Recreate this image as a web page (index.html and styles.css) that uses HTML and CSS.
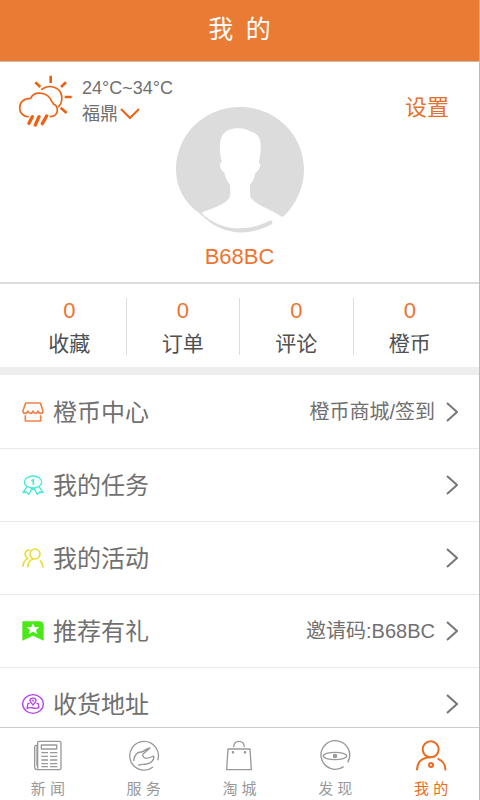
FILE: index.html
```html
<!DOCTYPE html>
<html lang="zh-CN">
<head>
<meta charset="utf-8">
<meta name="viewport" content="width=device-width, initial-scale=1">
<title>我的</title>
<link rel="stylesheet" href="styles.css">
</head>
<body>
<div class="app">
  <header class="header"><h1 class="title">我&ensp;的</h1></header>

  <main class="content">
    <section class="profile">
      <div class="weather">
        <svg class="weather-icon" viewBox="54 45 162 156" fill="none" stroke="#eb6312" stroke-width="5" stroke-linecap="round" aria-hidden="true">
          <path d="M84 170C70 170 59 159 59 143C59 126 72 115 92 115C101 93 143 93 155 124C159 127 160 129 160 132C168 135 172 143 172 150C172 163 164 169 151 170"/>
          <path d="M125 88C148 71 181 82 185 108C187 121 183 132 176 140"/>
          <path stroke-width="8" stroke-linecap="butt" d="M152 47V69M106 67L121 81M198 67L183 81M194 111H215M182 143L200 159"/>
          <path stroke-width="10" d="M97 170L87 190M117 170L106 195M140 168L127 191"/>
        </svg>
        <div class="weather-text">
          <span>24°C~34°C</span>
          <button class="city" type="button">福鼎<svg class="city-arrow" viewBox="0 0 20 12" fill="none" stroke="#eb6312" stroke-width="2" aria-hidden="true"><path d="M1 1L10 10L19 1"/></svg></button>
        </div>
      </div>
      <a class="settings" href="#settings">设置</a>
      <svg class="avatar" viewBox="48 34 384 378" aria-hidden="true">
        <path fill="#dcdcdc" d="M120 354C75 323 48 276 48 222C48 118 132 34 240 34C348 34 432 118 432 222C432 275 408 326 371 362Q365 365 360 360C334 341 294 333 273 307C269 299 270 284 270 268C279 257 284 245 286 232C293 228 298 221 300 212C301 206 299 202 296 199C300 183 303 165 302 148C302 125 291 111 270 107C257 95 222 95 205 103C180 115 179 140 180 164C181 177 182 189 186 199C181 200 179 205 180 211C182 221 187 228 193 230C195 245 201 257 210 267C211 281 212 297 208 307C190 331 158 336 124 351C176 404 258 413 331 374A7 7 0 0 1 335 386C258 428 180 415 120 354Z"/>
      </svg>
      <p class="name">B68BC</p>
    </section>

    <nav class="stats" aria-label="统计">
      <a class="stat" href="#fav"><span class="count">0</span><span>收藏</span></a>
      <a class="stat" href="#orders"><span class="count">0</span><span>订单</span></a>
      <a class="stat" href="#comments"><span class="count">0</span><span>评论</span></a>
      <a class="stat" href="#coins"><span class="count">0</span><span>橙币</span></a>
    </nav>

    <nav class="menu" aria-label="菜单">
      <a class="row" href="#center">
        <svg class="row-icon" viewBox="0 0 66 60" fill="none" stroke="#ef8146" stroke-width="5" stroke-linejoin="round" aria-hidden="true"><path d="M11 3H55L63 26Q63 34 56 34Q50 34 48 27Q46 34 40 34Q35 34 33 27Q31 34 25 34Q20 34 18 27Q16 34 9 34Q3 34 3 26ZM10 40V57H56V40"/></svg>
        <span class="label">橙币中心</span><span class="value">橙币商城/签到</span>
        <svg class="arrow" viewBox="0 0 12 20" aria-hidden="true"><path d="M1 1L11 10L1 19"/></svg>
      </a>
      <a class="row" href="#tasks">
        <svg class="row-icon" viewBox="0 0 66 60" fill="none" stroke="#43ead6" stroke-width="4" stroke-linejoin="round" aria-hidden="true"><ellipse cx="33" cy="21" rx="26" ry="18"/><path d="M15 35L3 53L13 51L20 58L30 40M51 35L63 53L53 51L46 58L36 40M26 39L33 43L40 39"/><path stroke-width="5" d="M28 17L34 14V29"/></svg>
        <span class="label">我的任务</span><span class="value"></span>
        <svg class="arrow" viewBox="0 0 12 20" aria-hidden="true"><path d="M1 1L11 10L1 19"/></svg>
      </a>
      <a class="row" href="#events">
        <svg class="row-icon" viewBox="0 0 66 60" fill="none" stroke="#ebdc3c" stroke-width="5" stroke-linecap="round" aria-hidden="true"><circle cx="39" cy="18" r="15"/><path d="M17 57C18 44 25 35 34 33M55 39Q63 46 63 57M22 6C8 6 5 23 17 31C8 37 3 46 3 55"/></svg>
        <span class="label">我的活动</span><span class="value"></span>
        <svg class="arrow" viewBox="0 0 12 20" aria-hidden="true"><path d="M1 1L11 10L1 19"/></svg>
      </a>
      <a class="row" href="#invite">
        <svg class="row-icon" viewBox="0 0 66 60" aria-hidden="true"><path fill="#4be818" d="M1 1H54Q65 3 65 12V59L33 44L1 59Z"/><path fill="#fff" d="M33 7L38 18L52 19L42 27L46 39L33 32L20 39L24 27L14 19L28 18Z"/></svg>
        <span class="label">推荐有礼</span><span class="value">邀请码:B68BC</span>
        <svg class="arrow" viewBox="0 0 12 20" aria-hidden="true"><path d="M1 1L11 10L1 19"/></svg>
      </a>
      <a class="row" href="#address">
        <svg class="row-icon" viewBox="0 0 66 60" fill="none" stroke="#b545ec" stroke-width="4" stroke-linejoin="round" aria-hidden="true"><ellipse cx="33" cy="30" rx="31" ry="28"/><path d="M33 33C27 27 24 23 24 19C24 10 42 10 42 19C42 23 39 27 33 33ZM23 28H18L15 43Q24 39 33 42Q42 45 51 41L48 28H43"/><circle cx="33" cy="20" r="2" stroke-width="3"/></svg>
        <span class="label">收货地址</span><span class="value"></span>
        <svg class="arrow" viewBox="0 0 12 20" aria-hidden="true"><path d="M1 1L11 10L1 19"/></svg>
      </a>
    </nav>
  </main>

  <nav class="tabs" aria-label="主导航">
    <a class="tab" href="#news">
      <svg class="tab-icon" viewBox="0 0 96 96" aria-hidden="true"><path d="M17 86V8Q17 4 21 4H83Q87 4 87 8V84Q87 89 82 89H15Q8 89 8 82V20Q8 16 12 16H15V78"/><path d="M28 15H74V27H28Z"/><path d="M28 38H48M54 38H76M28 49H48M54 49H76M28 60H48M54 60H76M28 71H48M54 71H76M28 80H48M54 80H76"/></svg>
      <span>新 闻</span>
    </a>
    <a class="tab" href="#service">
      <svg class="tab-icon" viewBox="0 0 96 96" aria-hidden="true"><path d="M75 81A43 43 0 1 1 89 61"/><path d="M17 63C19 44 28 36 40 36C49 36 52 25 66 24L46 41C42 46 46 54 54 55Q62 55 77 48C80 60 68 70 56 72C46 74 40 72 30 76"/></svg>
      <span>服 务</span>
    </a>
    <a class="tab" href="#shop">
      <svg class="tab-icon" viewBox="0 0 96 96" aria-hidden="true"><path d="M15 27H81L85 89H11ZM32 21Q33 4 48 4Q63 4 64 21"/><circle cx="30" cy="37" r="2"/><circle cx="66" cy="37" r="2"/></svg>
      <span>淘 城</span>
    </a>
    <a class="tab" href="#discover">
      <svg class="tab-icon" viewBox="0 0 96 96" aria-hidden="true"><path d="M74 80A43 43 0 1 1 86 67"/><ellipse cx="48" cy="48" rx="35" ry="11"/><circle cx="48" cy="48" r="4" stroke-width="6"/></svg>
      <span>发 现</span>
    </a>
    <a class="tab active" href="#me" aria-current="page">
      <svg class="tab-icon" viewBox="0 0 96 96" aria-hidden="true"><circle cx="47" cy="28" r="24"/><path d="M6 91C5 65 23 52 47 52M68 56C83 62 92 76 91 91"/><circle cx="48" cy="75" r="6"/></svg>
      <span>我 的</span>
    </a>
  </nav>
</div>
</body>
</html>
```
FILE: styles.css
```css
* { box-sizing: border-box; }

body {
  margin: 0;
  background: #fff;
  color: #707070;
  font-family: "Liberation Sans", "Noto Sans CJK SC", sans-serif;
}

a { color: inherit; text-decoration: none; }

svg { display: block; flex: none; }

.app {
  display: flex;
  flex-direction: column;
  height: 100vh;
  border-right: 1px solid #bbb;
}

.header {
  flex: none;
  padding: 11px 0 14px;
  background: #e97b35;
  border-bottom: 1px solid #c9b8ae;
}

.title {
  margin: 0;
  color: #fff;
  font-size: 25px;
  font-weight: 400;
  line-height: 36px;
  text-align: center;
}

.content {
  flex: 1;
  min-height: 0;
  overflow: hidden;
}

.profile {
  position: relative;
  padding: 45px 0 10px;
  border-bottom: 2px solid #dcdcdc;
}

.weather {
  position: absolute;
  top: 13px;
  left: 18px;
  display: flex;
  gap: 10px;
}

.weather-icon { width: 54px; height: 52px; }

.weather-text {
  display: flex;
  flex-direction: column;
  font-size: 18px;
  line-height: 26px;
}

.city {
  display: flex;
  align-items: center;
  gap: 2px;
  padding: 0;
  border: 0;
  background: none;
  color: inherit;
  font: inherit;
}

.city-arrow { width: 20px; height: 12px; }

.settings {
  position: absolute;
  top: 30px;
  right: 30px;
  color: #e4712d;
  font-size: 22px;
  line-height: 32px;
}

.avatar {
  width: 128px;
  height: 126px;
  margin: 0 auto;
}

.name {
  margin: 9px 0 0;
  color: #ed7430;
  font-size: 22px;
  line-height: 30px;
  text-align: center;
}

.stats {
  display: flex;
  padding: 14px 13px 12px;
  border-bottom: 8px solid #eee;
}

.stat {
  display: flex;
  flex: 1;
  flex-direction: column;
  align-items: center;
  gap: 9px;
  border-right: 1px solid #dcdcdc;
  color: #505050;
  font-size: 21px;
  line-height: 22px;
}

.stat:last-child { border-right: 0; }

.count {
  color: #ed7430;
  font-size: 22px;
  line-height: 26px;
}

.menu { padding-top: 1px; }

.row {
  display: flex;
  align-items: center;
  height: 73px;
  padding: 0 21px 0 22px;
  border-bottom: 1px solid #e9e9e9;
}

.row-icon { width: 22px; height: 20px; }

.label {
  margin-left: 9px;
  padding-bottom: 4px;
  font-size: 24px;
}

.value {
  margin-left: auto;
  padding-bottom: 4px;
  font-size: 20px;
}

.arrow {
  width: 12px;
  height: 20px;
  margin-left: 11px;
  fill: none;
  stroke: #777;
  stroke-width: 2;
}

.tabs {
  display: flex;
  flex: none;
  padding: 12px 0 0;
  border-top: 1px solid #ccc;
}

.tab {
  display: flex;
  flex: 1;
  flex-direction: column;
  align-items: center;
  gap: 6px;
  color: #999;
  font-size: 15px;
  line-height: 22px;
}

.tab.active { color: #eb6b20; }

.tab-icon {
  width: 32px;
  height: 32px;
  fill: none;
  stroke: currentColor;
  stroke-width: 4;
  stroke-linejoin: round;
}

.active .tab-icon { stroke-width: 6; }
```
